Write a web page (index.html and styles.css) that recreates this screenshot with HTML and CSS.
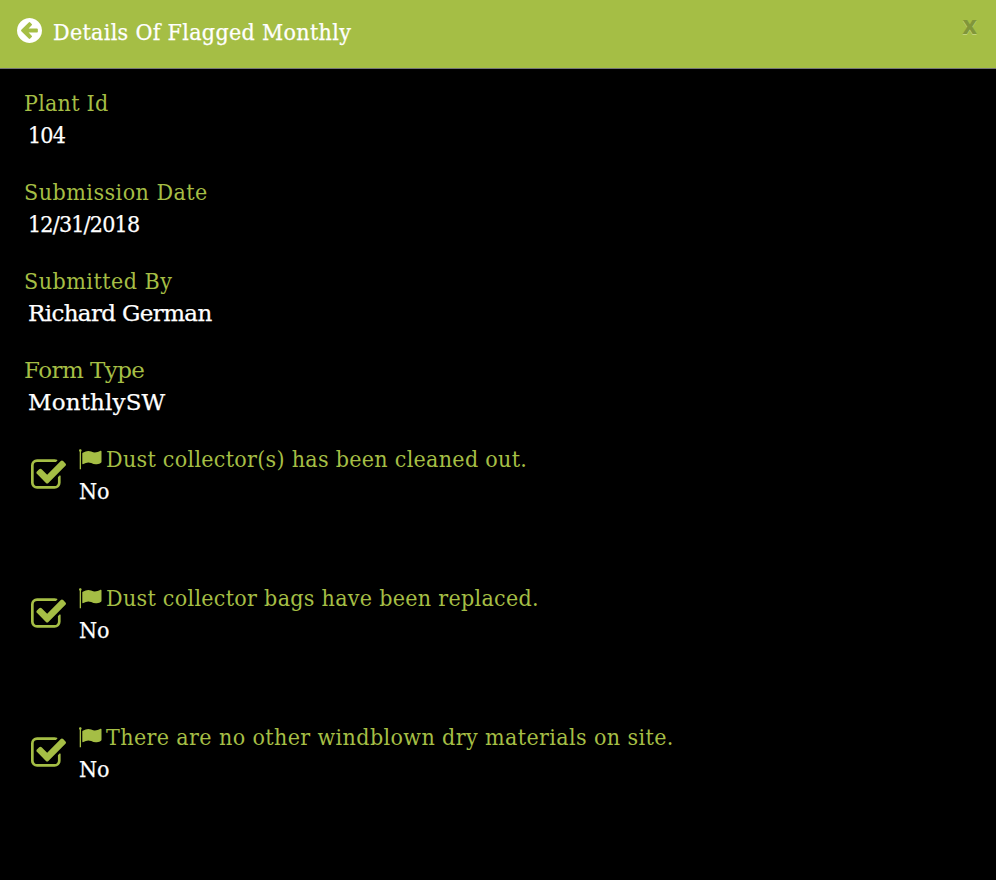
FILE: index.html
```html
<!DOCTYPE html>
<html lang="en">
<head>
<meta charset="utf-8">
<title>Details Of Flagged Monthly</title>
<link rel="stylesheet" href="styles.css">
</head>
<body>
<svg class="defs" aria-hidden="true">
<symbol id="check" viewBox="0 -128 1664 1408"><path transform="translate(0 -128) matrix(1 0 0 -1 0 1280)" d="M1408 606v-318q0 -119 -84.500 -203.500t-203.500 -84.500h-832q-119 0 -203.500 84.500t-84.500 203.500v832q0 119 84.500 203.500t203.500 84.500h832q63 0 117 -25q15 -7 18 -23q3 -17 -9 -29l-49 -49q-10 -10 -23 -10q-3 0 -9 2q-23 6 -45 6h-832q-66 0 -113 -47t-47 -113v-832q0 -66 47 -113t113 -47h832q66 0 113 47t47 113v254q0 13 9 22l64 64q10 10 23 10q6 0 12 -3q20 -8 20 -29zM1639 1095l-814 -814q-24 -24 -57 -24t-57 24l-430 430q-24 24 -24 57t24 57l110 110q24 24 57 24t57 -24l263 -263l647 647q24 24 57 24t57 -24l110 -110q24 -24 24 -57t-24 -57z" class="tick"/></symbol>
<symbol id="flag" viewBox="0 0 23 21"><path d="M0 1.500C0-.2 2.600-.2 2.600 1.500Q2.600 2.400 2 2.800V20.200H.7V2.800Q0 2.400 0 1.500ZM3.800 3.700Q8.500 1 12.200 2.600C15.500 4.100 18 3.500 21.500 1.800Q22.500 1.400 22.500 2.400V12.800Q22.500 13.500 21.700 13.900C18 15.800 15.500 15.700 12.200 14.100C9.500 13 7 13.500 4.400 15Q3.300 15.500 3.300 14.500V4.500Q3.300 4 3.800 3.700Z"/></symbol>
</svg>
<header>
<svg class="back" viewBox="0 0 1536 1536"><path d="M1280 832V704q0-26-19-45t-45-19H714l189-189q19-19 19-45t-19-45l-91-91q-18-18-45-18t-45 18L360 632l-91 91q-18 18-18 45t18 45l91 91 362 362q18 18 45 18t45-18l91-91q18-18 18-45t-18-45L714 896h502q26 0 45-19t19-45zM1536 768q0 209-103 385.500T1153.500 1433 768 1536t-385.500-103T103 1153.500 0 768t103-385.500T382.500 103 768 0t385.500 103T1433 382.500 1536 768z"/></svg>
<h1>Details Of Flagged Monthly</h1>
<button class="close" aria-label="Close">x</button>
</header>
<main>
<dl>
<div class="field plant"><dt>Plant Id</dt><dd>104</dd></div>
<div class="field date"><dt>Submission Date</dt><dd>12/31/2018</dd></div>
<div class="field author"><dt>Submitted By</dt><dd>Richard German</dd></div>
<div class="field type"><dt>Form Type</dt><dd>MonthlySW</dd></div>
</dl>
<ul>
<li><svg class="check"><use href="#check"/></svg><div><p class="question"><svg class="flag"><use href="#flag"/></svg><span>Dust collector(s) has been cleaned out.</span></p><p class="answer">No</p></div></li>
<li><svg class="check"><use href="#check"/></svg><div><p class="question"><svg class="flag"><use href="#flag"/></svg><span>Dust collector bags have been replaced.</span></p><p class="answer">No</p></div></li>
<li><svg class="check"><use href="#check"/></svg><div><p class="question site"><svg class="flag"><use href="#flag"/></svg><span>There are no other windblown dry materials on site.</span></p><p class="answer">No</p></div></li>
</ul>
</main>
</body>
</html>
```

FILE: styles.css
```css
*{box-sizing:border-box}
body{margin:0;background:#000;color:#fff;font:23px/32px "DejaVu Serif Condensed","DejaVu Serif",serif;font-stretch:condensed}
.defs{display:none}
h1,dl,dd,ul,p{margin:0;padding:0}
header{background:#a5be45;height:69px;border-bottom:1px solid #777;display:flex;align-items:flex-start;padding:16px 19px 0 17px}
.back{width:25px;height:25px;fill:#fff;margin-top:2px}
h1{font-size:23px;font-weight:400;margin-left:11px;letter-spacing:.32px}
h1,dd,.answer{-webkit-text-stroke:.25px #fff}
.close{margin-left:auto;margin-top:-6px;padding:0;border:0;background:none;color:#81963a;font:700 25px/28px "Open Sans",sans-serif;text-shadow:0 1px 0 #c3d67c}
main{padding:18px 24px}
.field{height:89px}
dt,.question{color:#a5be45}
dd{padding-left:4px}
.plant dt{letter-spacing:.25px}
.plant dd,.date dd{letter-spacing:-.8px}
.date dt,.author dt{letter-spacing:.48px}
.author dd,.type{font-family:"DejaVu Serif",serif;font-stretch:normal}
.author dd{letter-spacing:-.63px}
.type dt{letter-spacing:-.55px}
.type dd{letter-spacing:.15px}
ul{list-style:none}
li{display:flex;height:139px;padding-left:7px}
.check{width:35px;height:30px;fill:#a5be45;margin:16px 13px 0 0}
.tick{transform:translateY(1280px) scaleY(-1)}
.question{display:flex;white-space:nowrap;letter-spacing:.29px}
.site{letter-spacing:.38px}
.flag{width:23px;height:21px;fill:#a5be45;margin:6px 4px 0 0}
```
